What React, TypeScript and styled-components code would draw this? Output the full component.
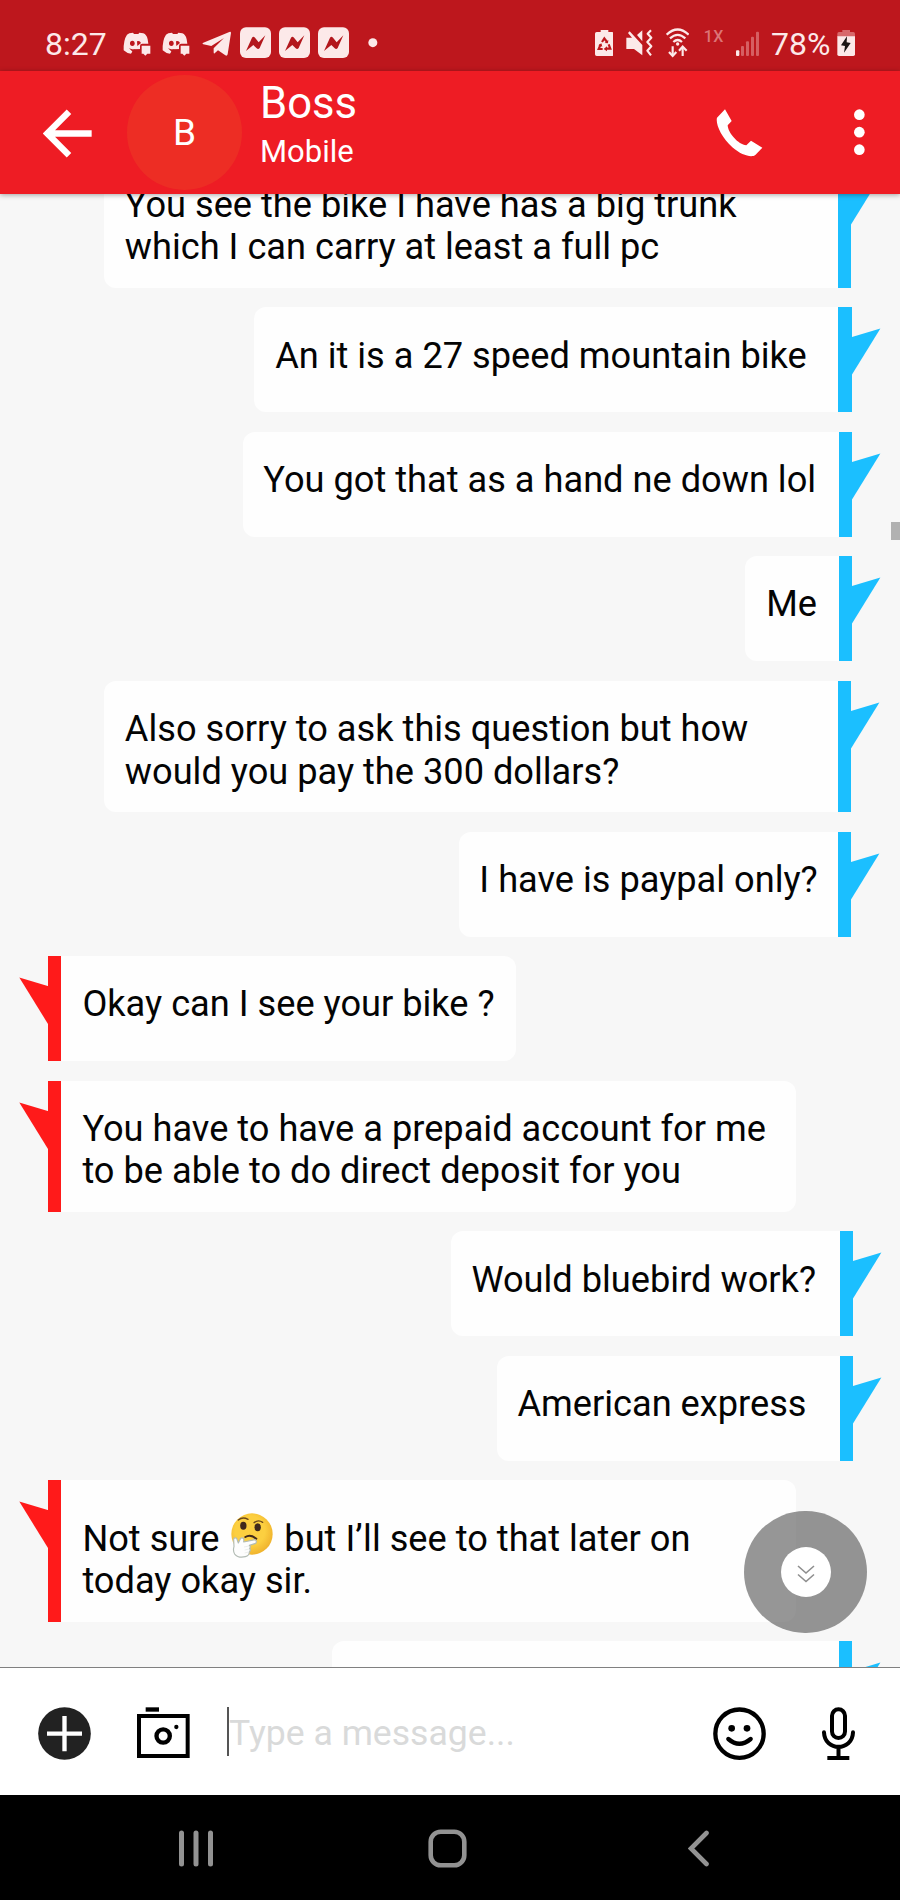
import React from "react";
import styled, { createGlobalStyle } from "styled-components";

const GlobalStyle = createGlobalStyle`
  * { box-sizing: border-box; }
  body { margin: 0; background: #f7f7f7; font-family: Roboto, "Liberation Sans", sans-serif; }
  svg { display: block; flex: none; }
`;

const Screen = styled.main`
  width: 900px;
  height: 1900px;
  display: flex;
  flex-direction: column;
  overflow: hidden;
  background: #f7f7f7;
`;

/* ---------- status bar ---------- */

const StatusBar = styled.div`
  flex: none;
  height: 71px;
  padding: 26px 45px 0;
  display: flex;
  justify-content: space-between;
  align-items: flex-start;
  background: #bd171d;
  color: #fce9e9;
`;

const StatusGroup = styled.div`
  display: flex;
  align-items: flex-start;
  height: 34px;
`;

const StatusText = styled.span<{ $width: number }>`
  width: ${(p) => p.$width}px;
  font-size: 32px;
  line-height: 37.6px;
  white-space: nowrap;
`;

const NetworkType = styled.span`
  width: 32px;
  font-size: 16px;
  font-weight: 500;
  line-height: 22px;
  letter-spacing: 0.5px;
  color: #dc7476;
`;

const StatusIcon = ({ x, w, gap = 0, children }: { x: number; w: number; gap?: number; children: React.ReactNode }) => (
  <IconSlot $gap={gap}>
    <svg width={w / 3} height={34} viewBox={`${x} 78 ${w} 102`} fill="#fce9e9">
      {children}
    </svg>
  </IconSlot>
);

const IconSlot = styled.span<{ $gap: number }>`
  display: block;
  margin-right: ${(p) => p.$gap}px;
`;

const DiscordIcon = () => (
  <StatusIcon x={369} w={84} gap={11.3}>
    <path d="M388 100 L399 98 L402 102 H415 L418 98 L430 100 Q440 104 443 118 L445 131 H427 Q420 131 420 138 V148 L401 148 L393 161 Q380 160 371 151 Q370 120 381 104 Z" />
    <path d="M425 137 H451 V161 H442 L436 167 L430 161 H425 Z" />
    <ellipse cx="397" cy="130" rx="7" ry="8" fill="#bd171d" />
    <path d="M411 124 Q419 120 423 129 L412 138 Z" fill="#bd171d" />
    <path d="M387 145 Q400 151 420 148 V155 L398 155 Z" fill="#bd171d" />
  </StatusIcon>
);

const TelegramIcon = () => (
  <StatusIcon x={602} w={89} gap={9}>
    <path d="M684 96 Q689 94 689 99 L679 163 Q677 169 672 166 L650 151 L640 160 Q637 162 637 157 V145 L668 114 L630 138 L606 133 Q601 131 606 128 Z" />
  </StatusIcon>
);

const MessengerIcon = ({ gap = 8 }: { gap?: number }) => (
  <StatusIcon x={717} w={93} gap={gap}>
    <rect x="717" y="82" width="93" height="92" rx="18" />
    <path d="M735 153 L753 113 Q757 107 762 113 L773 127 L793 106 L789 115 L776 144 Q772 150 767 145 L757 135 Z" fill="#b3171d" />
  </StatusIcon>
);

/* ---------- contact header ---------- */

const Header = styled.header`
  flex: none;
  position: relative;
  z-index: 2;
  height: 122.5px;
  display: flex;
  align-items: flex-start;
  background: #ee1c24;
  color: #fff;
  box-shadow: 0 1px 5px rgba(0, 0, 0, 0.35);
`;

const HeaderButton = styled.button<{ $left?: number; $top: number }>`
  margin: ${(p) => p.$top}px 0 0 ${(p) => p.$left ?? 0}px;
  padding: 0;
  border: 0;
  background: none;
`;

const Avatar = styled.div`
  width: 115px;
  height: 115px;
  margin: 4px 0 0 35px;
  padding-bottom: 1px;
  border-radius: 50%;
  display: flex;
  align-items: center;
  justify-content: center;
  background: #ed2d24;
  font-size: 37px;
`;

const Contact = styled.div`
  display: flex;
  flex-direction: column;
  flex: 1;
  padding: 7px 0 0 18px;
`;

const ContactName = styled.h1`
  margin: 0;
  font-size: 43.6px;
  font-weight: 400;
  line-height: 52px;
`;

const ContactKind = styled.span`
  font-size: 31px;
  line-height: 36px;
  margin-top: 4px;
`;

/* ---------- conversation ---------- */

const Chat = styled.section`
  position: relative;
  flex: 1;
  min-height: 0;
  overflow: hidden;
`;

const Thread = styled.div`
  display: flex;
  flex-direction: column;
  gap: 19.55px;
  margin-top: -37px;
`;

const Row = styled.div<{ $sent: boolean; $shift: number }>`
  display: flex;
  flex: none;
  flex-direction: ${(p) => (p.$sent ? "row" : "row-reverse")};
  justify-content: flex-end;
  padding: 0 ${(p) => 20 - p.$shift}px 0 19px;
`;

const Bubble = styled.div<{ $width: number; $sent: boolean }>`
  width: ${(p) => p.$width}px;
  min-height: 104.9px;
  padding: 27.2px 0 19px ${(p) => (p.$sent ? 20.8 : 21.4)}px;
  border-radius: ${(p) => (p.$sent ? "12px 0 0 12px" : "0 12px 12px 0")};
  background: #fefefe;
  color: #040404;
  font-size: 36.2px;
  line-height: 42.6px;
  white-space: pre-line;
`;

const Stripe = styled.div<{ $sent: boolean }>`
  width: 13.3px;
  background: ${(p) => (p.$sent ? "#1bbfff" : "#ff1a1a")};
`;

const EmojiSlot = styled.span`
  display: inline-block;
  width: 42px;
  height: 44.7px;
  margin: 5.7px 2px 0 3px;
  vertical-align: -7.5px;
`;

const ThinkingFace = () => (
  <EmojiSlot role="img" aria-label="thinking face">
    <svg width="42" height="44.7" viewBox="0 0 126 134">
      <defs>
        <radialGradient id="face" cx="45%" cy="42%" r="60%">
          <stop offset="0.6" stopColor="#fccf40" />
          <stop offset="1" stopColor="#efb12c" />
        </radialGradient>
      </defs>
      <circle cx="63" cy="63" r="62" fill="url(#face)" />
      <ellipse cx="37" cy="38" rx="9.5" ry="12" fill="#40291c" />
      <ellipse cx="80" cy="43" rx="9.5" ry="12" fill="#40291c" />
      <path d="M22 21 Q35 10 51 19M69 29 Q82 19 95 28" fill="none" stroke="#6b481c" strokeWidth="4" strokeLinecap="round" />
      <path d="M43 72 Q58 62 76 77" fill="none" stroke="#40291c" strokeWidth="6" strokeLinecap="round" />
      <path
        d="M8 78 Q11 72 17 76 L22 90 L29 76 Q35 72 39 79 L38 87 L72 80 Q79 84 74 91 L55 97 Q60 101 56 106 Q60 112 55 117 Q55 128 43 131 Q22 136 11 123 Q5 113 9 101 Z"
        fill="#fdfdfd"
        stroke="#b3bcb5"
        strokeWidth="3.5"
        strokeLinejoin="round"
      />
      <path d="M39 102 L54 99M41 111 L54 108M41 120 L52 117" stroke="#e2e5e2" strokeWidth="2" />
    </svg>
  </EmojiSlot>
);

const TailShape = styled.svg`
  overflow: visible;
`;

const Tail = ({ sent }: { sent: boolean }) => (
  <TailShape width="28.7" height="70" viewBox="0 0 28.7 70">
    {sent ? (
      <path d="M-2 30.600 L0 30 L28.400 21.600 L0 67.500 L-2 70 Z" fill="#1bbfff" />
    ) : (
      <path d="M30.700 30.600 L28.700 30 L0.300 21.600 L28.700 67.500 L30.700 70 Z" fill="#ff1a1a" />
    )}
  </TailShape>
);

type Message = { sent: boolean; width: number; shift?: number; body: React.ReactNode };

const messages: Message[] = [
  { sent: true, width: 734, body: "You see the bike I have has a big trunk\nwhich I can carry at least a full pc" },
  { sent: true, width: 584, shift: 0.3, body: "An it is a 27 speed mountain bike" },
  { sent: true, width: 596.4, shift: 0.9, body: "You got that as a hand ne down lol" },
  { sent: true, width: 93.5, shift: 0.9, body: "Me" },
  { sent: true, width: 734, body: "Also sorry to ask this question but how\nwould you pay the 300 dollars?" },
  { sent: true, width: 379.5, body: "I have is paypal only?" },
  { sent: false, width: 455, body: "Okay can I see your bike ?" },
  { sent: false, width: 735, body: "You have to have a prepaid account for me\nto be able to do direct deposit for you" },
  { sent: true, width: 389, shift: 1.6, body: "Would bluebird work?" },
  { sent: true, width: 343, shift: 1.6, body: "American express" },
  {
    sent: false,
    width: 735,
    body: (
      <>
        Not sure <ThinkingFace /> but I’ll see to that later on{"\n"}today okay sir.
      </>
    ),
  },
  { sent: true, width: 507, shift: 0.9, body: "" },
];

const ScrollThumb = styled.div`
  position: absolute;
  top: 328.5px;
  right: 0;
  width: 9px;
  height: 18px;
  background: #b1b1b1;
`;

const JumpButton = styled.button`
  position: absolute;
  right: 33px;
  bottom: 33.3px;
  width: 122.6px;
  height: 122.6px;
  padding: 0;
  border: 0;
  border-radius: 50%;
  display: flex;
  align-items: center;
  justify-content: center;
  background: rgba(74, 74, 74, 0.58);
`;

const JumpCore = styled.span`
  width: 50px;
  height: 50px;
  border-radius: 50%;
  display: flex;
  align-items: center;
  justify-content: center;
  padding-top: 4px;
  background: #fff;
`;

/* ---------- composer and navigation ---------- */

const Composer = styled.footer`
  flex: none;
  height: 128.5px;
  border-top: 1px solid #808080;
  padding: 39.3px 45px 0 38px;
  display: flex;
  align-items: flex-start;
  background: #fff;
`;

const ComposerIcon = styled.span<{ $gap: number }>`
  margin-right: ${(p) => p.$gap}px;
`;

const Field = styled.div`
  flex: 1;
  height: 49px;
  border-left: 2px solid #555;
  padding: 5px 0 0 0;
  font-size: 35.6px;
  line-height: 42px;
  color: #d9dada;
`;

const NavBar = styled.nav`
  flex: none;
  height: 105px;
  display: flex;
  align-items: center;
  padding: 1px 190px 0 179px;
  background: #000;
`;

const NavItem = styled.span<{ $gap?: number }>`
  margin-right: ${(p) => p.$gap ?? 0}px;
`;

export default function App() {
  return (
    <Screen>
      <GlobalStyle />
      <StatusBar>
        <StatusGroup>
          <StatusText $width={78}>8:27</StatusText>
          <DiscordIcon />
          <DiscordIcon />
          <TelegramIcon />
          <MessengerIcon />
          <MessengerIcon />
          <MessengerIcon gap={18.5} />
          <StatusIcon x={1103} w={30}>
            <circle cx="1117.500" cy="128" r="13.500" />
          </StatusIcon>
        </StatusGroup>
        <StatusGroup>
          <StatusIcon x={432} w={56} gap={13}>
            <path d="M449 90 H472 V96 H483 Q488 96 488 101 V163 Q488 168 483 168 H437 Q432 168 432 163 V101 Q432 96 437 96 H449 Z" />
            <path
              d="M453 126 L460 115 L468 126M473 133 L478 146 H465M455 147 H443 L449 133"
              fill="none"
              stroke="#bd171d"
              strokeWidth="6.5"
            />
            <path d="M461 129 L471 130 L472 120 Z M468 139 V154 L458 147 Z M442 136 L451 130 L454 140 Z" fill="#bd171d" />
          </StatusIcon>
          <StatusIcon x={529} w={80} gap={13}>
            <path d="M530 113 H547 L535 99 L540 94 L578 135 V166 L553 147 H530 Z" />
            <path d="M562 105 L578 91 V124 Z" />
            <path d="M604 91 L594 101 L605 113 L593 126 L605 139 L593 152 L604 166" fill="none" stroke="#fce9e9" strokeWidth="6.5" strokeLinejoin="round" />
          </StatusIcon>
          <StatusIcon x={648} w={70} gap={14.5}>
            <g fill="none" stroke="#fce9e9" strokeWidth="6.5">
              <path d="M650 104 Q683 73 716 104" />
              <path d="M660 115 Q683 94 706 115" />
              <path d="M670 126 Q683 114 696 126" />
              <path d="M668 139 V168M698 168 V143" />
              <path d="M657 156 L668 168 L679 156M687 152 L698 140 L710 152" />
            </g>
            <circle cx="683" cy="132" r="5" />
          </StatusIcon>
          <NetworkType>1X</NetworkType>
          <StatusIcon x={858} w={70} gap={12}>
            <rect x="858" y="151" width="10" height="17" rx="3" />
            <g fill="#d65f62">
              <rect x="873" y="138" width="9" height="30" rx="3" />
              <rect x="888" y="124" width="9" height="44" rx="3" />
              <rect x="903" y="110" width="9" height="58" rx="3" />
              <rect x="918" y="95" width="9" height="73" rx="3" />
            </g>
          </StatusIcon>
          <StatusText $width={65.7}>78%</StatusText>
          <StatusIcon x={1160} w={55}>
            <path d="M1176 90 H1199 V96 H1209 Q1214 96 1214 101 V111 H1161 V101 Q1161 96 1166 96 H1176 Z" fill="#d8686b" />
            <path d="M1161 109 H1214 V163 Q1214 168 1209 168 H1166 Q1161 168 1161 163 Z" />
            <path d="M1190 109 L1172 136 L1184 138 L1181 158 L1201 129 L1189 127 Z" fill="#1c1414" />
          </StatusIcon>
        </StatusGroup>
      </StatusBar>

      <Header>
        <HeaderButton $left={43} $top={37.5} aria-label="Back">
          <svg width="49" height="49" viewBox="129 325 147 147" fill="none" stroke="#fff" strokeWidth="19">
            <path d="M207 333 L142 398.500 L207 464M139 398.500 H275" />
          </svg>
        </HeaderButton>
        <Avatar>B</Avatar>
        <Contact>
          <ContactName>Boss</ContactName>
          <ContactKind>Mobile</ContactKind>
        </Contact>
        <HeaderButton $top={37.5} aria-label="Call">
          <svg width="47" height="48" viewBox="799 325 141 144" fill="#fff">
            <path d="M826 326 L846 361 L834 374 C835 397 866 432 890 434 L904 420 L938 441 L917 463 C906 472 875 464 848 440 C815 410 797 370 802 351 Z" />
          </svg>
        </HeaderButton>
        <HeaderButton $left={91} $top={38.2} aria-label="More options">
          <svg width="45.7" height="47" viewBox="1213 328 137 141" fill="#fff">
            <circle cx="1229" cy="345" r="16" />
            <circle cx="1229" cy="397.500" r="16" />
            <circle cx="1229" cy="450" r="16" />
          </svg>
        </HeaderButton>
      </Header>

      <Chat>
        <Thread>
          {messages.map((m, i) => (
            <Row key={i} $sent={m.sent} $shift={m.shift ?? 0}>
              <Bubble $width={m.width} $sent={m.sent}>
                {m.body}
              </Bubble>
              <Stripe $sent={m.sent} />
              <Tail sent={m.sent} />
            </Row>
          ))}
        </Thread>
        <ScrollThumb />
        <JumpButton aria-label="Jump to latest">
          <JumpCore>
            <svg width="18" height="18" viewBox="0 0 18 18" fill="none" stroke="#8e8e8e" strokeWidth="1.6">
              <path d="M1 1 L9 8 L17 1M1 9.500 L9 16.500 L17 9.500" />
            </svg>
          </JumpCore>
        </JumpButton>
      </Chat>

      <Composer>
        <ComposerIcon $gap={46}>
          <svg width="53" height="53" viewBox="114 171 159 159">
            <circle cx="193.500" cy="250.500" r="79" fill="#222" />
            <path d="M193.500 198 V304M141 251 H246" stroke="#fff" strokeWidth="13" />
          </svg>
        </ComposerIcon>
        <ComposerIcon $gap={37}>
          <svg width="53" height="53" viewBox="411 171 159 159" fill="none" stroke="#000">
            <rect x="437" y="172" width="40" height="13" fill="#000" stroke="none" />
            <rect x="417" y="198" width="146" height="120" strokeWidth="12" />
            <circle cx="489.500" cy="258" r="20" strokeWidth="13" />
            <circle cx="529" cy="231" r="6.500" fill="#000" stroke="none" />
          </svg>
        </ComposerIcon>
        <Field>Type a message...</Field>
        <ComposerIcon $gap={56}>
          <svg width="53" height="53" viewBox="789 171 159 159" fill="none" stroke="#000">
            <circle cx="868.500" cy="251" r="72.500" strokeWidth="13" />
            <circle cx="845" cy="235" r="10" fill="#000" stroke="none" />
            <circle cx="891" cy="235" r="10" fill="#000" stroke="none" />
            <path d="M835 267 Q868 296 902 267" strokeWidth="13" strokeLinecap="round" />
          </svg>
        </ComposerIcon>
        <svg width="33" height="53" viewBox="1115 171 99 159" fill="none" stroke="#000" strokeWidth="12">
          <rect x="1145" y="178" width="39" height="86" rx="19.500" />
          <path d="M1121 247 C1123 305 1206 305 1208 247" strokeLinecap="round" />
          <path d="M1164.500 291 V320M1131 324 H1197" />
        </svg>
      </Composer>

      <NavBar>
        <NavItem $gap={214}>
          <svg width="35" height="37" viewBox="0 0 35 37" fill="#929292">
            <rect x="0" y="0.500" width="5" height="36" rx="2.500" />
            <rect x="14.500" y="0.500" width="5" height="36" rx="2.500" />
            <rect x="29" y="0.500" width="5" height="36" rx="2.500" />
          </svg>
        </NavItem>
        <NavItem $gap={221}>
          <svg width="39" height="39" viewBox="0 0 39 39" fill="none" stroke="#929292" strokeWidth="4.600">
            <rect x="2.700" y="2.700" width="33.600" height="33.600" rx="10" />
          </svg>
        </NavItem>
        <NavItem>
          <svg width="22" height="37" viewBox="0 0 22 37" fill="none" stroke="#929292" strokeWidth="4.600" strokeLinecap="round">
            <path d="M18.500 3 L3 18.500 L18.500 34" />
          </svg>
        </NavItem>
      </NavBar>
    </Screen>
  );
}
